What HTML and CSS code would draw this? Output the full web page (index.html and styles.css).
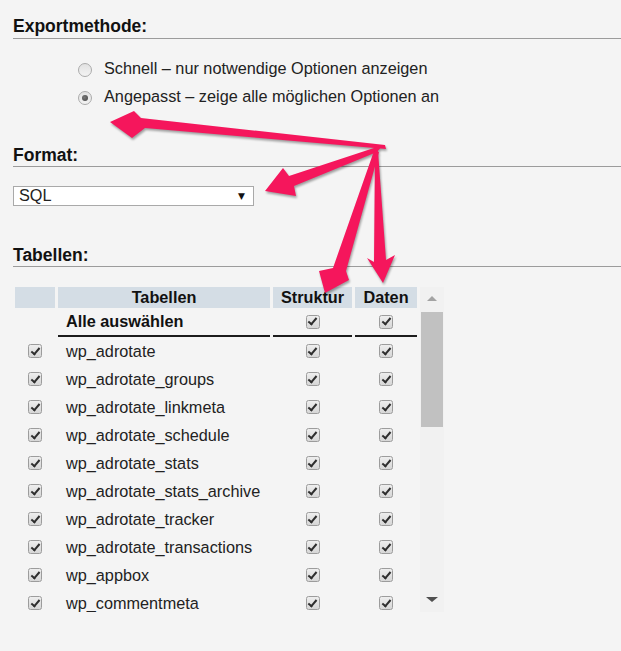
FILE: index.html
```html
<!DOCTYPE html>
<html lang="de">
<head>
<meta charset="utf-8">
<title>Export</title>
<link rel="stylesheet" href="styles.css">
</head>
<body>
<div class="page">
  <h2 class="heading">Exportmethode:</h2>
  <div class="options">
    <div class="option"><span class="radio"></span><span>Schnell – nur notwendige Optionen anzeigen</span></div>
    <div class="option"><span class="radio checked"></span><span>Angepasst – zeige alle möglichen Optionen an</span></div>
  </div>

  <h2 class="heading h-format">Format:</h2>
  <div class="select"><span>SQL</span><span class="caret">▼</span></div>

  <h2 class="heading h-tables">Tabellen:</h2>
  <div class="tables-wrap">
    <div class="tables-view">
      <div class="trow head">
        <div class="cell"></div>
        <div class="cell">Tabellen</div>
        <div class="cell">Struktur</div>
        <div class="cell">Daten</div>
      </div>
      <div class="trow all">
        <div class="cell"></div>
        <div class="cell name">Alle auswählen</div>
        <div class="cell c"><span class="cb"></span></div>
        <div class="cell c"><span class="cb"></span></div>
      </div>
      <div class="trow"><div class="cell c"><span class="cb"></span></div><div class="cell name">wp_adrotate</div><div class="cell c"><span class="cb"></span></div><div class="cell c"><span class="cb"></span></div></div>
      <div class="trow"><div class="cell c"><span class="cb"></span></div><div class="cell name">wp_adrotate_groups</div><div class="cell c"><span class="cb"></span></div><div class="cell c"><span class="cb"></span></div></div>
      <div class="trow"><div class="cell c"><span class="cb"></span></div><div class="cell name">wp_adrotate_linkmeta</div><div class="cell c"><span class="cb"></span></div><div class="cell c"><span class="cb"></span></div></div>
      <div class="trow"><div class="cell c"><span class="cb"></span></div><div class="cell name">wp_adrotate_schedule</div><div class="cell c"><span class="cb"></span></div><div class="cell c"><span class="cb"></span></div></div>
      <div class="trow"><div class="cell c"><span class="cb"></span></div><div class="cell name">wp_adrotate_stats</div><div class="cell c"><span class="cb"></span></div><div class="cell c"><span class="cb"></span></div></div>
      <div class="trow"><div class="cell c"><span class="cb"></span></div><div class="cell name">wp_adrotate_stats_archive</div><div class="cell c"><span class="cb"></span></div><div class="cell c"><span class="cb"></span></div></div>
      <div class="trow"><div class="cell c"><span class="cb"></span></div><div class="cell name">wp_adrotate_tracker</div><div class="cell c"><span class="cb"></span></div><div class="cell c"><span class="cb"></span></div></div>
      <div class="trow"><div class="cell c"><span class="cb"></span></div><div class="cell name">wp_adrotate_transactions</div><div class="cell c"><span class="cb"></span></div><div class="cell c"><span class="cb"></span></div></div>
      <div class="trow"><div class="cell c"><span class="cb"></span></div><div class="cell name">wp_appbox</div><div class="cell c"><span class="cb"></span></div><div class="cell c"><span class="cb"></span></div></div>
      <div class="trow"><div class="cell c"><span class="cb"></span></div><div class="cell name">wp_commentmeta</div><div class="cell c"><span class="cb"></span></div><div class="cell c"><span class="cb"></span></div></div>
    </div>
    <div class="scrollbar">
      <div class="sb-up"><span class="tri-up"></span></div>
      <div class="sb-thumb"></div>
      <div class="sb-space"></div>
      <div class="sb-down"><span class="tri-down"></span></div>
    </div>
  </div>

  <svg class="arrows" viewBox="0 0 621 651" width="621" height="651" aria-hidden="true">
    <polygon points="110,122 134,111 141,118 385,145 386,149 145,128 132,138"/>
    <polygon points="265,191 283,168 289,176 383,145 377,152 294,186 296,196"/>
    <polygon points="325,293 319,271 333,268 374,151 379,152 346,271 349,280"/>
    <polygon points="383,283 367,258 374,262 375,151 378,151 386,260 395,255"/>
  </svg>
</div>
</body>
</html>
```

FILE: styles.css
```css
html, body {
  margin: 0;
  padding: 0;
}

body {
  background: #f4f4f4;
  font-family: "Liberation Sans", Arial, sans-serif;
  color: #222;
}

.page {
  position: relative;
  width: 621px;
  height: 651px;
  overflow: hidden;
  padding-top: 16.3px;
  box-sizing: border-box;
}

.heading {
  margin: 0 0 0 13px;
  font-size: 17.5px;
  line-height: 20px;
  font-weight: bold;
  color: #111;
  padding-bottom: 1.5px;
  border-bottom: 1px solid #9b9b9b;
}

.options {
  margin-top: 15.6px;
  padding-left: 78px;
}

.option {
  display: flex;
  align-items: center;
  gap: 12px;
  height: 28px;
  font-size: 16.25px;
  color: #222;
}

.radio {
  width: 14px;
  height: 14px;
  box-sizing: border-box;
  border-radius: 50%;
  border: 1px solid #ababab;
  background: linear-gradient(#e2e2e2, #f3f3f3);
  margin-top: 3px;
  display: flex;
  align-items: center;
  justify-content: center;
  flex: none;
}

.radio.checked::after {
  content: "";
  width: 6px;
  height: 6px;
  border-radius: 50%;
  background: radial-gradient(circle at 40% 40%, #777, #444);
}

.h-format {
  margin-top: 34.3px;
}

.select {
  margin: 18.5px 0 0 13px;
  width: 241px;
  height: 20.3px;
  box-sizing: border-box;
  border: 1px solid #a9a9a9;
  background: #fff;
  display: flex;
  align-items: center;
  justify-content: space-between;
  padding: 0 8px 0 5px;
  font-size: 16.25px;
  color: #222;
}

.caret {
  font-family: "DejaVu Sans", sans-serif;
  font-size: 9px;
  color: #111;
}

.h-tables {
  margin-top: 39px;
}

.tables-wrap {
  margin: 20px 0 0 15px;
  display: flex;
  height: 325px;
}

.tables-view {
  width: 402px;
  overflow: hidden;
}

.trow {
  display: grid;
  grid-template-columns: 40px 212px 79px 62px;
  column-gap: 3px;
  height: 28px;
  font-size: 16.25px;
}

.cell {
  display: flex;
  align-items: center;
}

.cell.c {
  justify-content: center;
}

.cell.name {
  padding-left: 8px;
  white-space: nowrap;
}

.trow.head {
  height: 21px;
}

.trow.head .cell {
  background: #d4dde5;
  font-weight: bold;
  color: #111;
  justify-content: center;
}

.trow.all {
  height: 29px;
}

.trow.all .cell {
  box-sizing: border-box;
}

.trow.all .cell + .cell {
  border-bottom: 2px solid #1c1c1c;
}

.trow.all .name {
  font-weight: bold;
  color: #111;
}

.cb {
  width: 14px;
  height: 14px;
  box-sizing: border-box;
  border: 1px solid #9c9c9c;
  border-radius: 2.5px;
  background: linear-gradient(#eeeeee, #d6d6d6);
  display: inline-flex;
  align-items: center;
  justify-content: center;
}

.cb::after {
  content: "";
  width: 3px;
  height: 7px;
  border-right: 2.6px solid #2e2e2e;
  border-bottom: 2.6px solid #2e2e2e;
  transform: rotate(40deg);
  margin-top: -2px;
}

.scrollbar {
  margin-left: 3px;
  width: 24px;
  background: #f1f1f1;
  display: flex;
  flex-direction: column;
}

.sb-up {
  height: 22px;
  display: flex;
  align-items: center;
  justify-content: center;
}

.tri-up {
  width: 0;
  height: 0;
  border-left: 5px solid transparent;
  border-right: 5px solid transparent;
  border-bottom: 5px solid #a3a3a3;
}

.sb-thumb {
  margin: 3px 1px 0;
  height: 115px;
  background: #c1c1c1;
}

.sb-space {
  flex: 1;
}

.sb-down {
  height: 26px;
  display: flex;
  align-items: center;
  justify-content: center;
}

.tri-down {
  width: 0;
  height: 0;
  border-left: 6px solid transparent;
  border-right: 6px solid transparent;
  border-top: 5px solid #505050;
}

.arrows {
  position: absolute;
  top: 0;
  left: 0;
  pointer-events: none;
  fill: #f5165c;
  filter: drop-shadow(1px 2px 1.2px rgba(0, 0, 0, 0.35));
}
```
